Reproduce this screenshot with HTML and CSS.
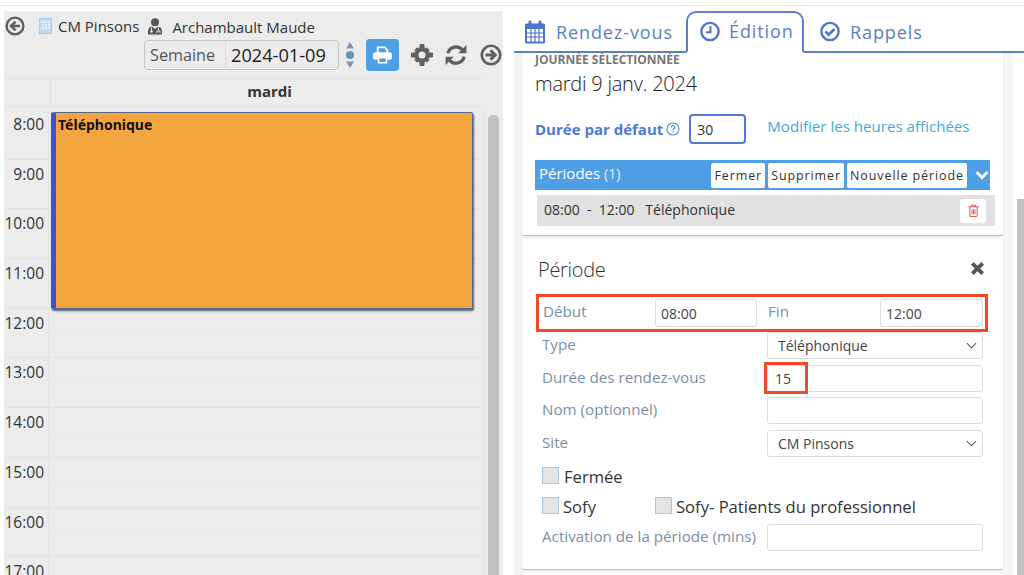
FILE: index.html
```html
<!DOCTYPE html>
<html lang="fr">
<head>
<meta charset="utf-8">
<title>Horaire</title>
<link rel="stylesheet" href="styles.css">
</head>
<body>
<div class="topline"></div>
<main class="app">
  <section class="left">
    <div class="toolbar">
      <div class="crumbs">
        <svg class="ic-nav" viewBox="0 0 20 20"><circle cx="10" cy="10" r="8.4" fill="none" stroke="#5f5f5f" stroke-width="2.4"/><path d="M10.5 5.6 6 10l4.5 4.4M6.5 10H15" fill="none" stroke="#5f5f5f" stroke-width="2.6"/></svg>
        <svg class="ic-building" viewBox="0 0 13 16"><rect x=".5" y=".5" width="12" height="15" fill="#bcdcf5" stroke="#a5cdee"/><path d="M3 3h2v2H3zM6 3h2v2H6zM9 3h2v2H9zM3 6h2v2H3zM6 6h2v2H6zM9 6h2v2H9zM3 9h2v2H3zM6 9h2v2H6zM9 9h2v2H9z" fill="#e6f3fc"/></svg>
        <span class="site">CM Pinsons</span>
        <svg class="ic-doc" viewBox="0 0 16 17"><circle cx="8" cy="4.2" r="4" fill="#555"/><path d="M1 16.5v-3.3c0-3 2-4.4 4-4.6l3 2.4 3-2.4c2 .2 4 1.6 4 4.6v3.3z" fill="#555"/><path d="M4.5 9.5v3M11.500 9.500v2.500" stroke="#eee" stroke-width="1"/><circle cx="4.500" cy="13.500" r="1.200" fill="#eee"/><path d="M10 15v-2h3v2" fill="none" stroke="#eee"/></svg>
        <span class="prof">Archambault Maude</span>
      </div>
      <div class="controls">
        <div class="date-group"><span class="date-label">Semaine</span><span class="date-value">2024-01-09</span></div>
        <svg class="ic-spin" viewBox="0 0 10 28"><path d="M5 1 9 7.500H1z" fill="#7f97b5"/><circle cx="5" cy="14" r="4" fill="#6f8fb5"/><path d="M5 27 9 20.500H1z" fill="#7f97b5"/></svg>
        <button class="print" type="button"><svg viewBox="0 0 20 18"><path d="M5 7V1h7.500L15 3.500V7M5 13H2a2 2 0 0 1-1-1V9a2 2 0 0 1 2-2h14a2 2 0 0 1 2 2v3a2 2 0 0 1-1 1h-3" fill="none" stroke="#fff" stroke-width="2"/><path d="M1 8h18v5H15v-2H5v2H1z" fill="#fff"/><path d="M5.800 11.800h8.400v5.400H5.800z" fill="none" stroke="#fff" stroke-width="1.600"/></svg></button>
        <svg class="ic-tool" viewBox="0 0 20 20"><g fill="#5f5f5f"><circle cx="10" cy="10" r="6.800"/><path d="M8 0h4l.6 4h-5.200zM8 20h4l.6-4H7.400zM0 8v4l4 .6V7.400zM20 8v4l-4 .6V7.400zM2.900 5.700 5.700 2.900 8 6 6 8zM17.100 5.700 14.300 2.900 12 6 14 8zM2.900 14.300l2.800 2.800L8 14l-2-2zM17.100 14.300l-2.800 2.800L12 14l2-2z"/></g><circle cx="10" cy="10" r="3.200" fill="#ececec"/></svg>
        <svg class="ic-tool" viewBox="0 0 20 20"><path d="M2.600 8.500A7.600 7.600 0 0 1 16 5.500" fill="none" stroke="#5f5f5f" stroke-width="3"/><path d="M19.500 1v7.500H12z" fill="#5f5f5f"/><path d="M17.400 11.500A7.600 7.600 0 0 1 4 14.500" fill="none" stroke="#5f5f5f" stroke-width="3"/><path d="M.5 19v-7.500H8z" fill="#5f5f5f"/></svg>
        <svg class="ic-tool ic-next" viewBox="0 0 20 20"><circle cx="10" cy="10" r="8.400" fill="none" stroke="#5f5f5f" stroke-width="2.400"/><path d="M9.500 5.600 14 10l-4.500 4.400M13.500 10H5" fill="none" stroke="#5f5f5f" stroke-width="2.600"/></svg>
      </div>
    </div>
    <div class="calendar">
      <div class="grid">
        <div class="day-head"><span class="corner"></span><span class="day-name">mardi</span></div>
        <div class="hours">
          <div class="hour"><span class="time">8:00</span><span class="slot"></span></div>
          <div class="hour"><span class="time">9:00</span><span class="slot"></span></div>
          <div class="hour"><span class="time">10:00</span><span class="slot"></span></div>
          <div class="hour"><span class="time">11:00</span><span class="slot"></span></div>
          <div class="hour"><span class="time">12:00</span><span class="slot"></span></div>
          <div class="hour"><span class="time">13:00</span><span class="slot"></span></div>
          <div class="hour"><span class="time">14:00</span><span class="slot"></span></div>
          <div class="hour"><span class="time">15:00</span><span class="slot"></span></div>
          <div class="hour"><span class="time">16:00</span><span class="slot"></span></div>
          <div class="hour"><span class="time">17:00</span><span class="slot"></span></div>
          <div class="event"><b>Téléphonique</b></div>
        </div>
      </div>
      <div class="cal-scroll"><div class="cal-thumb"></div></div>
    </div>
  </section>
  <section class="right">
    <nav class="tabs">
      <a class="tab"><svg class="tab-ic" viewBox="0 0 22 24"><path d="M2.500 3.500h17a1.500 1.500 0 0 1 1.500 1.500v17a1.500 1.500 0 0 1-1.500 1.500h-17A1.500 1.500 0 0 1 1 22V5a1.500 1.500 0 0 1 1.500-1.500z" fill="#4f74c9"/><path d="M3 9h16v12.500H3z" fill="#fff"/><path d="M3 13h16M3 17h16M7 9v13M11 9v13M15 9v13" stroke="#4f74c9" stroke-width="1.200"/><rect x="4.500" y=".5" width="3" height="5.500" rx="1.400" fill="#4f74c9"/><rect x="14.500" y=".5" width="3" height="5.500" rx="1.400" fill="#4f74c9"/></svg>Rendez-vous</a>
      <a class="tab active"><svg class="tab-ic" viewBox="0 0 20 20"><circle cx="10" cy="10" r="8.600" fill="none" stroke="#4f74c9" stroke-width="2.400"/><path d="M10.500 4.500v6.300H6" fill="none" stroke="#4f74c9" stroke-width="2"/></svg>Édition</a>
      <a class="tab"><svg class="tab-ic" viewBox="0 0 20 20"><circle cx="10" cy="10" r="8.600" fill="none" stroke="#4f74c9" stroke-width="2.400"/><path d="m5.500 10 3.200 3.200 5.800-5.700" fill="none" stroke="#4f74c9" stroke-width="2.600"/></svg>Rappels</a>
    </nav>
    <div class="content">
      <div class="cards">
        <article class="card day-card">
          <h4 class="eyebrow">JOURNÉE SÉLECTIONNÉE</h4>
          <h2 class="day-title">mardi 9 janv. 2024</h2>
          <div class="default-row">
            <label class="default-label">Durée par défaut</label>
            <svg class="ic-help" viewBox="0 0 14 14"><circle cx="7" cy="7" r="6" fill="none" stroke="#4f8fdc" stroke-width="1.100"/><path d="M5.200 5.500C5.300 3 9 3.200 8.900 5.300 8.900 6.800 7 6.700 7 8.300" fill="none" stroke="#4f8fdc" stroke-width="1.200"/><circle cx="7" cy="10" r=".8" fill="#4f8fdc"/></svg>
            <span class="default-input">30</span>
            <a class="hours-link">Modifier les heures affichées</a>
          </div>
          <div class="periods-bar">
            <span class="periods-title">Périodes <small>(1)</small></span>
            <button class="mini" type="button">Fermer</button>
            <button class="mini" type="button">Supprimer</button>
            <button class="mini" type="button">Nouvelle période</button>
            <svg class="ic-chev" viewBox="0 0 14 10"><path d="M1.500 2 7 7.500 12.500 2" fill="none" stroke="#fff" stroke-width="3"/></svg>
          </div>
          <div class="period-row">
            <span class="period-text">08:00&nbsp; -&nbsp; 12:00&nbsp;&nbsp; Téléphonique</span>
            <button class="trash" type="button"><svg viewBox="0 0 12 14"><path d="M.5 3h11M4 3V1.200h4V3M2 3.200V12.500c0 .6.400 1 1 1h6c.6 0 1-.4 1-1V3.200M4.400 5.500v5.500M6 5.500v5.500M7.600 5.500v5.500" fill="none" stroke="#ef5350" stroke-width="1.100"/></svg></button>
          </div>
        </article>
        <article class="card period-card">
          <div class="period-head">
            <h3 class="period-title">Période</h3>
            <svg class="ic-close" viewBox="0 0 14 14"><path d="m2.200 2.200 9.600 9.600M11.800 2.200l-9.600 9.600" stroke="#555" stroke-width="3.600"/></svg>
          </div>
          <div class="form">
            <div class="row-times">
              <label>Début</label><span class="field">08:00</span>
              <label>Fin</label><span class="field">12:00</span>
            </div>
            <div class="row"><label>Type</label><span class="field select">Téléphonique<svg viewBox="0 0 12 7"><path d="m1 1 5 5 5-5" fill="none" stroke="#555" stroke-width="1.200"/></svg></span></div>
            <div class="row"><label>Durée des rendez-vous</label><span class="field short">15</span></div>
            <div class="row"><label>Nom (optionnel)</label><span class="field"></span></div>
            <div class="row"><label>Site</label><span class="field select">CM Pinsons<svg viewBox="0 0 12 7"><path d="m1 1 5 5 5-5" fill="none" stroke="#555" stroke-width="1.200"/></svg></span></div>
            <div class="check-row"><span class="check"></span><span>Fermée</span></div>
            <div class="check-row two"><span class="check-pair"><span class="check"></span><span>Sofy</span></span><span class="check-pair"><span class="check"></span><span>Sofy- Patients du professionnel</span></span></div>
            <div class="row last"><label>Activation de la période (mins)</label><span class="field"></span></div>
          </div>
        </article>
        <div class="card next-card"></div>
      </div>
      <div class="page-scroll"><div class="page-thumb"></div></div>
    </div>
  </section>
</main>
</body>
</html>
```
FILE: styles.css
```css
* { box-sizing: border-box; }
html, body { margin: 0; height: 575px; overflow: hidden; background: #fff; }
body { font-family: "Open Sans", "Noto Sans", sans-serif; color: #333; }
.topline { height: 6px; border-bottom: 1px solid #e8e8e8; }
.app { display: flex; height: 569px; padding-top: 5px; }

.left { width: 499px; margin-left: 4px; background: #ececec; display: flex; flex-direction: column; overflow: hidden; }
.toolbar { height: 67px; flex: none; }
.crumbs { display: flex; align-items: center; height: 30px; padding-left: 1px; color: #333; font-size: 15px; }
.ic-nav { width: 20px; height: 20px; margin-right: 14px; }
.ic-building { width: 13px; height: 16px; margin-right: 6px; }
.site { margin-right: 8px; }
.ic-doc { width: 16px; height: 17px; margin-right: 9px; }
.prof { position: relative; top: 1px; }
.controls { display: flex; align-items: center; padding-left: 140px; margin-top: -2px; }
.date-group { display: flex; align-items: center; width: 195px; height: 30px; border: 1px solid #c4c4c4; border-radius: 4px; }
.date-label { width: 81px; padding-left: 5px; line-height: 28px; color: #555; border-right: 1px solid #dcdcdc; font-size: 16.200px; }
.date-value { padding-left: 5px; color: #222; font-size: 18.200px; }
.ic-spin { width: 10px; height: 28px; margin-left: 6px; }
.print { width: 33px; height: 32px; margin-left: 11px; border: 0; padding: 0; border-radius: 4px; background: #4f9fe6; display: flex; align-items: center; justify-content: center; }
.print svg { width: 19px; height: 18px; }
.ic-tool { width: 22px; height: 22px; margin-left: 12px; flex: none; }
.ic-next { margin-left: 13px; }

.calendar { flex: 1; display: flex; min-height: 0; }
.grid { width: 480px; flex: none; }
.day-head { display: flex; height: 29px; border-top: 1px solid #e4e4e4; border-bottom: 1px solid #e2e2e2; }
.corner { width: 47px; border-right: 1px solid #e2e2e2; }
.day-name { flex: 1; text-align: center; font-weight: 700; font-size: 15px; line-height: 25px; padding-left: 4px; }
.hours { position: relative; margin-top: 3px; }
.hour { display: flex; height: 49.700px; border-bottom: 1px solid #e3e3e3; }
.time { width: 45px; flex: none; text-align: right; font-size: 15.500px; line-height: 28px; padding-right: 4px; border-right: 1px solid #e4e4e4; color: #333; }
.slot { flex: 1; border-right: 1px solid #e6e6e6; background: linear-gradient(#ececec 24px, #e8e8e8 24px, #e8e8e8 25px, #ececec 25px); }
.event { position: absolute; left: 47px; top: 2px; width: 422px; height: 197px; background: #f5a540; border: 1px solid #54688a; border-left: 5px solid #3b50d8; border-radius: 2px; font-size: 14px; line-height: 24px; color: #111; padding-left: 2px; box-shadow: 1px 2px 2px rgba(60,70,90,.85); font-family: "Noto Sans", sans-serif; }
.cal-scroll { flex: 1; padding: 37px 0 0 4px; }
.cal-thumb { width: 11px; height: 500px; background: #c1c1c1; border-radius: 5px 5px 0 0; }

.right { flex: 1; margin-left: 11px; display: flex; flex-direction: column; min-width: 0; overflow: hidden; }
.tabs { display: flex; height: 42px; flex: none; border-bottom: 2px solid #5b7ed0; align-items: stretch; padding-left: 12px; margin-left: -2px; }
.tab { display: flex; align-items: center; color: #5b7ec9; font-size: 18px; letter-spacing: .9px; padding: 1px 0 0 0; }
.tab:first-child { width: 162px; }
.tab:first-child .tab-ic { width: 22px; height: 24px; margin-right: 10px; }
.active { width: 118px; margin-bottom: -2px; background: #fff; border: 2px solid #5b7ed0; border-bottom: 2px solid #fff; border-radius: 10px 10px 0 0; padding: 0 0 2px 12px; }
.tab:last-child { margin-left: 16px; }
.tab-ic { width: 20px; height: 21px; margin-right: 9px; flex: none; }
.tab:last-child .tab-ic { margin-right: 10px; }

.content { flex: 1; display: flex; min-height: 0; background: #f5f5f5; }
.cards { width: 499px; flex: none; padding: 0 10px 0 8px; }
.page-scroll { flex: 1; padding: 146px 0 0 4px; background: #fff; }
.page-thumb { width: 8px; height: 380px; background: #c1c1c1; }
.card { background: #fff; border-radius: 2px; box-shadow: 0 1px 1px rgba(0,0,0,.25); }
.day-card { height: 182px; padding: 0 8px 0 13px; margin-bottom: 4px; }
.eyebrow { margin: 0; font-size: 12px; font-weight: 700; color: #777; line-height: 13px; }
.day-title { margin: 2px 0 0; font-weight: 300; font-size: 20px; line-height: 31px; color: #222; letter-spacing: -.23px; }
.default-row { display: flex; align-items: center; height: 30px; margin-top: 15px; }
.default-label { font-weight: 700; font-size: 15px; color: #4f78d8; }
.ic-help { width: 14px; height: 14px; margin-left: 3px; }
.default-input { width: 57px; height: 30px; margin-left: 9px; border: 2px solid #4f78d8; border-radius: 4px; font-size: 14px; line-height: 28px; padding-left: 6px; color: #333; }
.hours-link { margin-left: 21px; margin-top: -6px; font-size: 15.100px; color: #45a9dc; }
.periods-bar { display: flex; align-items: center; height: 30px; margin-top: 16px; margin-right: 5px; background: #4f9fe6; padding: 0 0 0 4px; gap: 3px; }
.periods-title { flex: 1; color: #fff; font-size: 15px; padding-bottom: 4px; }
.periods-title small { font-size: 14px; color: #e2eefb; }
.mini { height: 25px; padding: 0 3px; border: 0; background: #fff; border-radius: 2px; font: 12.500px "Open Sans", sans-serif; letter-spacing: .9px; color: #333; }
.ic-chev { width: 14px; height: 10px; margin: 0 1px 0 5px; flex: none; }
.period-row { display: flex; align-items: center; justify-content: space-between; height: 31px; margin-top: 5px; margin-left: 2px; background: #e1e1e1; padding: 0 9px 0 7px; font-size: 14px; color: #333; }
.period-text { padding-bottom: 3px; }
.trash { width: 26px; height: 24px; border: 0; background: #fff; border-radius: 3px; display: flex; align-items: center; justify-content: center; padding: 0; }
.trash svg { width: 11px; height: 13px; }

.period-card { height: 330px; padding: 0 20px; margin-bottom: 4px; }
.period-head { display: flex; align-items: center; justify-content: space-between; height: 55px; }
.period-title { margin: 5px 0 0 -4px; font-weight: 300; font-size: 20px; color: #333; letter-spacing: -.3px; }
.ic-close { width: 15px; height: 15px; margin: 3px -2px 0 0; }
.next-card { height: 40px; }
.form { font-size: 15.200px; color: #333; }
.form label { color: #7d8fa5; }
.row-times { display: grid; grid-template-columns: 116px 102px 11px 112px 103px; align-items: center; height: 38px; margin: 0 -5px 0 -6px; padding: 0 2px 0 0; border: 3px solid #f0492c; }
.row-times label { padding-left: 4px; padding-bottom: 4px; }
.row-times label:nth-of-type(2) { grid-column: 4; padding-left: 0; }
.field { display: flex; align-items: center; justify-content: space-between; height: 27px; border: 1px solid #dcdcdc; border-radius: 3px; background: #fff; padding: 0 5px; font-size: 14px; color: #444; }
.row-times .field { height: 28px; }
.row { display: grid; grid-template-columns: 225px 216px; align-items: start; height: 32.700px; }
.row label { line-height: 24px; }
.row .field { padding-left: 10px; }
.row .select { padding: 0 5px 0 10px; }
.row .select svg { width: 11px; height: 7px; }
.row .short { position: relative; padding-left: 7px; }
.short::after { content: ""; box-sizing: border-box; position: absolute; left: -4px; top: -4px; width: 44px; height: 32px; border: 3px solid #f0492c; }
.check-row { display: flex; align-items: center; gap: 5px; font-size: 16.600px; height: 30px; padding-bottom: 2px; color: #333; }
.check-row.two { gap: 0; }
.check-pair { display: flex; align-items: center; gap: 4px; }
.check-pair:first-child { width: 113px; }
.check { width: 17px; height: 17px; border: 1px solid #a5c6e5; background: #e4e4e4; margin-bottom: 3px; flex: none; }
.last { margin-top: 1px; }
```
